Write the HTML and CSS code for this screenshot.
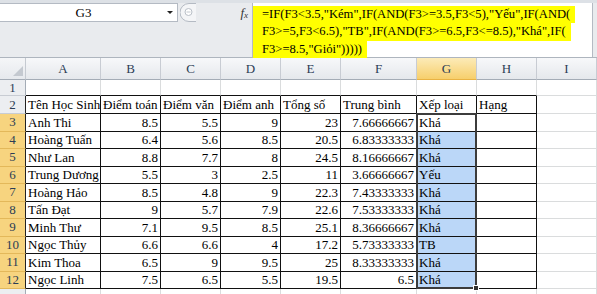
FILE: index.html
```html
<!DOCTYPE html>
<html lang="vi">
<head>
    <meta charset="UTF-8">
    <meta name="viewport" content="width=device-width, initial-scale=1.0">
    <link rel="stylesheet" href="styles.css">
</head>
<body>
    <div class="formula-bar">
        <div class="name-area">
            <div class="name-box">
                <span class="cell-ref">G3</span>
                <span class="drop-arrow"></span>
            </div>
            <svg class="grip" width="16" height="19" viewBox="0 0 16 19">
                <path d="M16 0.5 H9 A8.5 8.5 0 0 0 9 18.5 H16" fill="#f4f5f7" stroke="#b4bac3"/>
                <circle cx="8.5" cy="9" r="3.5" fill="#fff" stroke="#b9bfc7"/>
                <line x1="6.5" y1="9" x2="10.5" y2="9" stroke="#c3c8cf"/>
            </svg>
            <span class="fx">f<sub>x</sub></span>
        </div>
        <div class="formula">
            <div class="line"><span class="hl">=IF(F3&lt;3.5,"Kém",IF(AND(F3&gt;=3.5,F3&lt;5),"Yếu",IF(AND(</span></div>
            <div class="line"><span class="hl">F3&gt;=5,F3&lt;6.5),"TB",IF(AND(F3&gt;=6.5,F3&lt;=8.5),"Khá",IF(</span></div>
            <div class="line"><span class="hl">F3&gt;=8.5,"Giỏi")))))</span></div>
        </div>
    </div>

    <div class="sheet">
        <!-- column headers -->
        <div class="corner">
            <svg width="10" height="10" viewBox="0 0 10 10"><path d="M10 0 V10 H0 Z" fill="#c4c9d0"/></svg>
        </div>
        <div class="ch">A</div><div class="ch">B</div><div class="ch">C</div><div class="ch">D</div>
        <div class="ch">E</div><div class="ch">F</div><div class="ch sel">G</div><div class="ch">H</div><div class="ch">I</div>

        <!-- row 1 -->
        <div class="rh">1</div>
        <div class="c top"></div><div class="c top"></div><div class="c top"></div><div class="c top"></div>
        <div class="c top"></div><div class="c top"></div><div class="c top"></div><div class="c top"></div><div class="c"></div>

        <!-- row 2 -->
        <div class="rh edge">2</div>
        <div class="c t">Tên Học Sinh</div><div class="c t">Điểm toán</div><div class="c t">Điểm văn</div><div class="c t">Điểm anh</div>
        <div class="c t">Tổng số</div><div class="c t">Trung bình</div><div class="c t">Xếp loại</div><div class="c t">Hạng</div><div class="c"></div>

        <div class="rh sel edge">3</div>
        <div class="c t">Anh Thi</div><div class="c t n">8.5</div><div class="c t n">5.5</div><div class="c t n">9</div>
        <div class="c t n">23</div><div class="c t n">7.66666667</div>
        <div class="c t active">Khá<div class="selection"><span class="handle"></span></div></div>
        <div class="c t"></div><div class="c"></div>

        <div class="rh sel edge">4</div>
        <div class="c t">Hoàng Tuấn</div><div class="c t n">6.4</div><div class="c t n">5.6</div><div class="c t n">8.5</div>
        <div class="c t n">20.5</div><div class="c t n">6.83333333</div><div class="c t pick">Khá</div><div class="c t"></div><div class="c"></div>

        <div class="rh sel edge">5</div>
        <div class="c t">Như Lan</div><div class="c t n">8.8</div><div class="c t n">7.7</div><div class="c t n">8</div>
        <div class="c t n">24.5</div><div class="c t n">8.16666667</div><div class="c t pick">Khá</div><div class="c t"></div><div class="c"></div>

        <div class="rh sel edge">6</div>
        <div class="c t">Trung Dương</div><div class="c t n">5.5</div><div class="c t n">3</div><div class="c t n">2.5</div>
        <div class="c t n">11</div><div class="c t n">3.66666667</div><div class="c t pick">Yếu</div><div class="c t"></div><div class="c"></div>

        <div class="rh sel edge">7</div>
        <div class="c t">Hoàng Hảo</div><div class="c t n">8.5</div><div class="c t n">4.8</div><div class="c t n">9</div>
        <div class="c t n">22.3</div><div class="c t n">7.43333333</div><div class="c t pick">Khá</div><div class="c t"></div><div class="c"></div>

        <div class="rh sel edge">8</div>
        <div class="c t">Tấn Đạt</div><div class="c t n">9</div><div class="c t n">5.7</div><div class="c t n">7.9</div>
        <div class="c t n">22.6</div><div class="c t n">7.53333333</div><div class="c t pick">Khá</div><div class="c t"></div><div class="c"></div>

        <div class="rh sel edge">9</div>
        <div class="c t">Minh Thư</div><div class="c t n">7.1</div><div class="c t n">9.5</div><div class="c t n">8.5</div>
        <div class="c t n">25.1</div><div class="c t n">8.36666667</div><div class="c t pick">Khá</div><div class="c t"></div><div class="c"></div>

        <div class="rh sel edge">10</div>
        <div class="c t">Ngọc Thủy</div><div class="c t n">6.6</div><div class="c t n">6.6</div><div class="c t n">4</div>
        <div class="c t n">17.2</div><div class="c t n">5.73333333</div><div class="c t pick">TB</div><div class="c t"></div><div class="c"></div>

        <div class="rh sel edge">11</div>
        <div class="c t">Kim Thoa</div><div class="c t n">6.5</div><div class="c t n">9</div><div class="c t n">9.5</div>
        <div class="c t n">25</div><div class="c t n">8.33333333</div><div class="c t pick">Khá</div><div class="c t"></div><div class="c"></div>

        <div class="rh sel edge">12</div>
        <div class="c t">Ngọc Linh</div><div class="c t n">7.5</div><div class="c t n">6.5</div><div class="c t n">5.5</div>
        <div class="c t n">19.5</div><div class="c t n">6.5</div><div class="c t pick">Khá</div><div class="c t"></div><div class="c"></div>

        <!-- row 13, cut off -->
        <div class="rh"></div>
        <div class="c"></div><div class="c"></div><div class="c"></div><div class="c"></div>
        <div class="c"></div><div class="c"></div><div class="c"></div><div class="c"></div><div class="c"></div>
    </div>
</body>
</html>
```

FILE: styles.css
```css
body {
    margin: 0;
    width: 597px;
    height: 294px;
    overflow: hidden;
    background-color: #fff;
    font-family: "Liberation Serif", "Times New Roman", serif;
    font-size: 13px;
    color: #000;
}

/* formula bar */
.formula-bar {
    display: flex;
    height: 58px;
    box-sizing: border-box;
    background-color: #e9ebee;
    border-top: 3px solid #dde1e6;
    border-bottom: 1px solid #aeb5be;
}

.name-area {
    width: 252px;
    display: flex;
    align-items: flex-start;
}

.name-box {
    width: 178px;
    height: 19px;
    box-sizing: border-box;
    display: flex;
    align-items: center;
    background-color: #fff;
    border: 1px solid #b4bac3;
    border-left: none;
}

.cell-ref {
    flex: 1;
    text-align: center;
}

.drop-arrow {
    width: 0;
    height: 0;
    margin-right: 4px;
    border-left: 3px solid transparent;
    border-right: 3px solid transparent;
    border-top: 3px solid #222;
}

.grip {
    margin-left: 2px;
}

.fx {
    margin-left: auto;
    margin-right: 4px;
    font-style: italic;
    line-height: 19px;
    color: #333;
}

.fx sub {
    font-size: 9px;
    vertical-align: -1px;
}

.formula {
    width: 341px;
    padding-top: 3px;
    box-sizing: border-box;
    background-color: #fff;
    border-left: 1px solid #b4bac3;
    border-right: 1px solid #b4bac3;
    font-size: 12.6px;
}

.line {
    height: 17.3px;
}

.hl {
    display: inline-block;
    line-height: 17.3px;
    padding: 0 5px 0 9px;
    background-color: #ffff00;
    white-space: nowrap;
}

/* sheet */
.sheet {
    display: grid;
    grid-template-columns: 26px 75px repeat(4, 60px) 76px repeat(3, 60px);
    grid-template-rows: 22px 16px 18px repeat(10, 17.5px) 20px;
}

.corner {
    display: flex;
    align-items: flex-end;
    justify-content: flex-end;
    padding: 0 2px 3px 0;
    background: linear-gradient(#f5f6f8, #e6e9ed);
    border-right: 1px solid #c5cad1;
    border-bottom: 1px solid #a4acb6;
}

.ch {
    display: flex;
    align-items: center;
    justify-content: center;
    color: #2b3d55;
    background: linear-gradient(#f7f8fa, #e5e8ec);
    border-right: 1px solid #c8ccd3;
    border-bottom: 1px solid #a4acb6;
}

.ch.sel {
    background: linear-gradient(#fcebb8, #f7cf6c);
    border-bottom-color: #e9b344;
}

.rh {
    display: flex;
    align-items: center;
    justify-content: center;
    color: #2b3d55;
    background-color: #eceef1;
    border-right: 1px solid #a4acb6;
    border-bottom: 1px solid #c8ccd3;
}

.rh.sel {
    background-color: #f7d47f;
    border-bottom-color: #e3b85a;
}

.rh.edge {
    border-right-color: #222;
}

.c {
    display: flex;
    align-items: flex-end;
    padding: 0 2px 1px;
    line-height: 15px;
    white-space: nowrap;
    overflow: hidden;
    border-right: 1px solid #dadcdd;
    border-bottom: 1px solid #dadcdd;
}

.n {
    justify-content: flex-end;
}

.t {
    border-right-color: #111;
    border-bottom-color: #111;
}

.top {
    border-bottom-color: #111;
}

.pick {
    background-color: #bbd7f8;
}

/* active cell carries the outline of the selected range G3:G12 */
.active {
    position: relative;
    overflow: visible;
}

.selection {
    position: absolute;
    left: -1px;
    top: -1px;
    width: 61px;
    height: 176px;
    box-sizing: border-box;
    border: 2px solid #3c3c3c;
    pointer-events: none;
}

.handle {
    position: absolute;
    right: -4px;
    bottom: -4px;
    width: 4px;
    height: 4px;
    background-color: #333;
    border: 1px solid #fff;
}
```
